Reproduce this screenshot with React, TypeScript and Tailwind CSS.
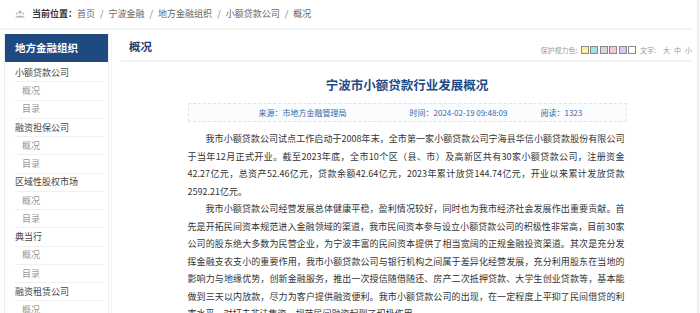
import React from 'react';

const crumbs = ['首页', '宁波金融', '地方金融组织', '小额贷款公司', '概况'];

const menu = [
  { title: '小额贷款公司', subs: ['概况', '目录'] },
  { title: '融资担保公司', subs: ['概况', '目录'] },
  { title: '区域性股权市场', subs: ['概况', '目录'] },
  { title: '典当行', subs: ['概况', '目录'] },
  { title: '融资租赁公司', subs: ['概况', '目录'] },
];

const eyeColors = ['#f7f1a1', '#a9dcf3', '#d7d7d7', '#f6c8d6', '#dbc6f3', '#ffffff'];

const paragraphs = [
  '我市小额贷款公司试点工作启动于2008年末，全市第一家小额贷款公司宁海县华信小额贷款股份有限公司于当年12月正式开业。截至2023年底，全市10个区（县、市）及高新区共有30家小额贷款公司，注册资金42.27亿元，总资产52.46亿元，贷款余额42.64亿元，2023年累计放贷144.74亿元，开业以来累计发放贷款2592.21亿元。',
  '我市小额贷款公司经营发展总体健康平稳，盈利情况较好，同时也为我市经济社会发展作出重要贡献。首先是开拓民间资本规范进入金融领域的渠道，我市民间资本参与设立小额贷款公司的积极性非常高，目前30家公司的股东绝大多数为民营企业，为宁波丰富的民间资本提供了相当宽阔的正规金融投资渠道。其次是充分发挥金融支农支小的重要作用，我市小额贷款公司与银行机构之间属于差异化经营发展，充分利用股东在当地的影响力与地缘优势，创新金融服务，推出一次授信随借随还、房产二次抵押贷款、大学生创业贷款等，基本能做到三天以内放款，尽力为客户提供融资便利。我市小额贷款公司的出现，在一定程度上平抑了民间借贷的利率水平，对打击非法集资、规范民间融资起到了积极作用。',
];

const LocationIcon = () => (
  <svg width="10" height="8" viewBox="0 0 10 8" className="mr-[7px]">
    <circle cx="5" cy="2" r="1.6" fill="#9fb0c4" />
    <path d="M1.6 7.6 Q5 3.2 8.4 7.6 Z" fill="#9fb0c4" />
    <circle cx="1.8" cy="3.6" r="1.1" fill="#b9c6d4" />
    <circle cx="8.2" cy="3.6" r="1.1" fill="#b9c6d4" />
    <path d="M0 7.6 Q1.8 4.6 3.4 6.6 L3 7.6 Z" fill="#b9c6d4" />
    <path d="M10 7.6 Q8.2 4.6 6.6 6.6 L7 7.6 Z" fill="#b9c6d4" />
  </svg>
);

export default function App() {
  return (
    <div className="flex w-[700px] h-[313px] overflow-hidden bg-white font-['Noto_Sans_CJK_SC',sans-serif]">
      <div className="w-[697px] flex flex-col">
        {/* breadcrumb */}
        <div className="h-[30px] mr-[4px] shrink-0 flex items-center pl-[15px] border-b-2 border-[#f3f4f6] text-[9px] text-[#666]">
          <LocationIcon />
          <span className="font-bold text-[#333]">当前位置：</span>
          {crumbs.map((c, i) => (
            <React.Fragment key={c}>
              {i > 0 && <span className="px-[5px] text-[#777]">/</span>}
              <span>{c}</span>
            </React.Fragment>
          ))}
        </div>

        <div className="flex flex-1 pt-[4px] pl-[4px] min-h-0">
          {/* side menu */}
          <aside className="w-[105px] shrink-0 border-x border-[#ececec]">
            <div className="h-[28px] bg-[#1e4a7f] flex items-center pl-[10px] text-[10.5px] font-bold text-white">
              地方金融组织
            </div>
            <ul className="pt-[2px] px-[10px] pr-[5px]">
              {menu.map((m) => (
                <React.Fragment key={m.title}>
                  <li className="h-[18.25px] flex items-center border-b border-[#f0f0f0] text-[9px] text-[#444]">
                    {m.title}
                  </li>
                  {m.subs.map((s) => (
                    <li
                      key={m.title + s}
                      className="h-[18.25px] flex items-center pl-[7px] border-b border-[#f0f0f0] text-[9px] text-[#999]"
                    >
                      {s}
                    </li>
                  ))}
                </React.Fragment>
              ))}
            </ul>
          </aside>

          {/* main */}
          <main className="flex-1 ml-[2px] border-l border-[#f6f6f6] pl-[9px] pr-[4px] min-w-0">
            <div className="h-[28px] flex items-center justify-between border-b-2 border-[#f2f3f5] pl-[8px]">
              <h2 className="text-[11.5px] font-bold text-[#1f3d6c]">概况</h2>
              <div className="flex items-center pt-[6px] text-[7px] text-[#999]">
                <span>保护视力色:</span>
                <div className="flex gap-[1.5px] ml-[3px]">
                  {eyeColors.map((c) => (
                    <span
                      key={c}
                      className="w-[8px] h-[8px] border border-[#8a8a8a]"
                      style={{ backgroundColor: c }}
                    />
                  ))}
                </div>
                <span className="ml-[4px]">文字:</span>
                <span className="ml-[7px]">大</span>
                <span className="ml-[4px]">中</span>
                <span className="ml-[4px] mr-[1px]">小</span>
              </div>
            </div>

            <h1 className="mt-[14px] text-center text-[12.5px] leading-[18px] font-bold text-[#1f4b86]">
              宁波市小额贷款行业发展概况
            </h1>

            <div className="w-[439px] mx-auto">
              <div className="mt-[9px] h-[19px] flex items-center pl-[70px] border border-dashed border-[#e2e4e8] bg-[#fbfcfe] text-[8px] text-[#3a67a3]">
                <span>来源：市地方金融管理局</span>
                <span className="ml-[63px]">时间：2024-02-19 09:48:09</span>
                <span className="ml-[33px]">阅读：1323</span>
              </div>
              <div className="mt-[8px] w-[437px] text-[9px] leading-[17.5px] text-[#333]">
                {paragraphs.map((p, i) => (
                  <p key={i} className="indent-[2em] text-justify">
                    {p}
                  </p>
                ))}
              </div>
            </div>
          </main>
        </div>
      </div>
      <div className="w-[2px] bg-[#e8eff8]" />
    </div>
  );
}
